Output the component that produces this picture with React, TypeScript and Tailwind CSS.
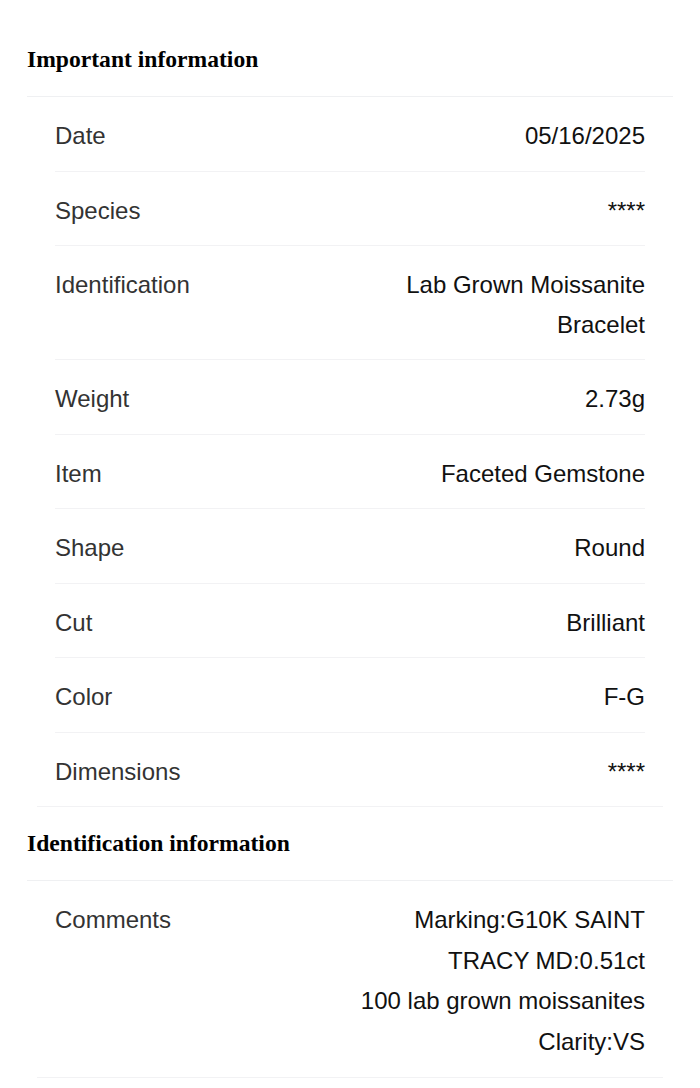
import React from "react";

type Row = { label: string; value: string[] };

const important: Row[] = [
  { label: "Date", value: ["05/16/2025"] },
  { label: "Species", value: ["****"] },
  { label: "Identification", value: ["Lab Grown Moissanite", "Bracelet"] },
  { label: "Weight", value: ["2.73g"] },
  { label: "Item", value: ["Faceted Gemstone"] },
  { label: "Shape", value: ["Round"] },
  { label: "Cut", value: ["Brilliant"] },
  { label: "Color", value: ["F-G"] },
  { label: "Dimensions", value: ["****"] },
];

const ident: Row[] = [
  {
    label: "Comments",
    value: ["Marking:G10K SAINT", "TRACY MD:0.51ct", "100 lab grown moissanites", "Clarity:VS"],
  },
];

function Heading({ children }: { children: React.ReactNode }) {
  return (
    <div className="h-[74px] flex items-center border-b border-[#eff0f2]">
      <h2
        className="text-[23.6px] font-bold text-black leading-none"
        style={{ fontFamily: '"Liberation Serif", "Times New Roman", serif' }}
      >
        {children}
      </h2>
    </div>
  );
}

function List({ rows, wide }: { rows: Row[]; wide?: boolean }) {
  return (
    <div className="mx-[10px] border-b border-[#f2f2f4]">
      {rows.map((r, i) => (
        <div key={r.label} className="px-[18px]">
          <div
            className={
              "flex justify-between items-start pt-[19px] pb-[15px] text-[24px] " +
              (wide ? "leading-[40.5px] " : "leading-[39.5px] ") +
              (i < rows.length - 1 ? "border-b border-[#f2f2f4]" : "")
            }
          >
            <div className="text-[#333333]">{r.label}</div>
            <div className="text-right text-[#111111]">
              {r.value.map((v) => (
                <div key={v}>{v}</div>
              ))}
            </div>
          </div>
        </div>
      ))}
    </div>
  );
}

export default function App() {
  return (
    <div
      className="bg-white min-h-[1088px] px-[27px] pt-[23px]"
      style={{ fontFamily: '"Liberation Sans", Arial, sans-serif' }}
    >
      <Heading>Important information</Heading>
      <List rows={important} />
      <Heading>Identification information</Heading>
      <List rows={ident} wide />
    </div>
  );
}
